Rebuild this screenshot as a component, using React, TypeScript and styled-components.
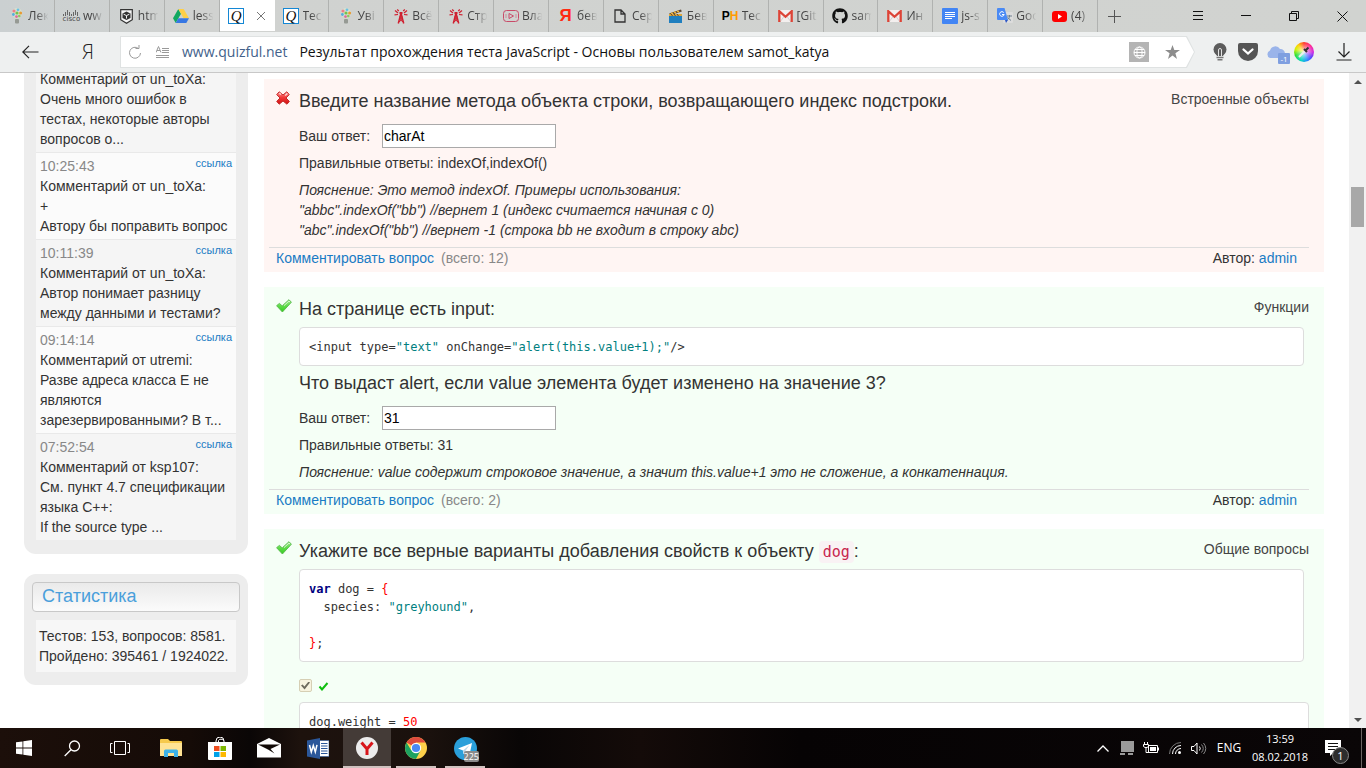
import React from "react";
import styled, { createGlobalStyle, css } from "styled-components";
import { FaGithub } from "react-icons/fa";

const GlobalStyle = createGlobalStyle`
  * { box-sizing: border-box; }
  html, body { margin: 0; height: 100%; overflow: hidden; }
  body {
    font-family: "Liberation Sans", Arial, sans-serif;
    font-size: 14px;
    line-height: 20px;
    color: #333;
    background: #fff;
  }
  button { border: 0; padding: 0; margin: 0; background: none; color: inherit; font: inherit; }
  svg { display: block; flex: none; }
`;

const uiFont = `"Open Sans", "Noto Sans", sans-serif`;

const Screen = styled.div`
  display: flex;
  flex-direction: column;
  height: 100vh;
`;

/* ---------- tab strip ---------- */

const TabBar = styled.header`
  display: flex;
  align-items: stretch;
  flex: none;
  height: 32px;
  background: linear-gradient(90deg, #cbd0d1 0, #d0d2d0 200px, #d1d3d0 100%);
  font-family: ${uiFont};
  font-size: 12px;
  color: #444;
`;

const Tabs = styled.nav`
  display: grid;
  grid-template-columns: repeat(20, minmax(0, 1fr));
  flex: 0 1 1098px;
  min-width: 0;
`;

const Tab = styled.button<{ $active?: boolean }>`
  display: flex;
  align-items: center;
  gap: 3px;
  min-width: 0;
  padding: 0 2px 0 8px;
  border-right: 1px solid #b0b2b0;
  ${(p) =>
    p.$active &&
    css`
      background: #fff;
      justify-content: space-between;
      padding-right: 8px;
      border-right-color: #fff;
      height: 31px;
    `}
`;

const TabIcon = styled.span`
  display: flex;
  align-items: center;
  justify-content: center;
  flex: none;
  width: 17px;
  height: 18px;
`;

const TabText = styled.span`
  flex: 1;
  min-width: 0;
  overflow: hidden;
  white-space: nowrap;
  text-align: left;
  mask-image: linear-gradient(90deg, #000 35%, transparent 85%);
`;

const NewTab = styled.button`
  display: flex;
  align-items: center;
  justify-content: center;
  width: 32px;
`;

const WindowButtons = styled.div`
  display: flex;
  margin-left: auto;
`;

const WindowButton = styled.button`
  display: flex;
  align-items: center;
  justify-content: center;
  width: 48px;
`;

const QuizMark = styled.span`
  display: flex;
  align-items: center;
  justify-content: center;
  width: 16px;
  height: 16px;
  border: 1px solid #1487d4;
  background: #fff;
  color: #111;
  font: italic 15px/14px "Liberation Serif", serif;
`;

const CiscoMark = styled.span`
  display: flex;
  flex-direction: column;
  align-items: center;
  font: 7px/7px "DejaVu Sans", sans-serif;
  color: #444;
`;

const PhMark = styled.span`
  font: bold 12px/16px "Liberation Sans", sans-serif;
  color: #000;
  b { color: #ff9a00; }
`;

const YaMark = styled.span`
  font: bold 17px/18px "Liberation Sans", sans-serif;
  color: #ff2a12;
`;

const CloseIcon = () => (
  <svg width="10" height="10" viewBox="0 0 10 10" stroke="#777" fill="none"><path d="M1 1l8 8M9 1L1 9" /></svg>
);

const BulbTab = () => (
  <svg width="12" height="16" viewBox="0 0 12 16">
    <circle cx="6" cy="5" r="5" fill="#d7e2cf" /><path d="M3 8h6l-1 3.500H4z" fill="#cfdcc6" />
    <circle cx="3" cy="3" r="1.600" fill="#ef7f86" /><circle cx="7" cy="1.800" r="1.400" fill="#6ac0e4" />
    <circle cx="9.600" cy="5" r="1.500" fill="#e79a35" /><circle cx="6" cy="5" r="1.600" fill="#76c24e" />
    <circle cx="2.400" cy="6.500" r="1.400" fill="#54aedb" /><circle cx="5.500" cy="8.600" r="1.400" fill="#df6c9d" /><circle cx="8.300" cy="8" r="1.300" fill="#8cc95f" />
    <rect x="4" y="11" width="4" height="4.500" rx="1" fill="#969a94" />
  </svg>
);

const ShieldTab = () => (
  <svg width="13" height="15" viewBox="0 0 13 15">
    <path d="M.7.7h11.600v10L6.500 14.300.7 10.700z" fill="#f4f4f4" stroke="#333" strokeWidth="1.200" />
    <path d="M6.500 2.500l4 2v4.500l-4 2-4-2V4.500z" fill="#333" />
    <path d="M3.600 5.200l2.900 1.400 2.900-1.400M6.500 6.600v3" stroke="#f4f4f4" fill="none" />
  </svg>
);

const DriveTab = () => (
  <svg width="16" height="14" viewBox="0 0 16 14">
    <path d="M5.300 0L0 9.300 2.700 14 8 4.700z" fill="#11a861" />
    <path d="M5.300 0h5.400L16 9.300h-5.400z" fill="#ffcf48" />
    <path d="M5.400 9.300H16L13.300 14H2.700z" fill="#3777e3" />
  </svg>
);

const AntennaTab = () => (
  <svg width="14" height="16" viewBox="0 0 14 16" fill="none" stroke="#cf2030">
    <path d="M7 5L4.300 15.500M7 5l2.700 10.500" strokeWidth="1.500" />
    <path d="M6 8h2M5.300 11h3.400M4.800 14L8.700 11M9.200 14L5.300 11M5.800 8.500l2.500 2.500M8.200 8.500L5.700 11" />
    <path d="M5.500 5h3" strokeWidth="2" />
    <path d="M4.800 3L3.200 1.500M9.200 3l1.600-1.500M4 5L1 2.500M10 5l3-2.500M4 6.500L.5 6.800M10 6.500l3.500.3" strokeWidth="1.200" />
  </svg>
);

const VideoTab = () => (
  <svg width="16" height="12" viewBox="0 0 16 12" fill="none" stroke="#c94a68">
    <rect x=".5" y=".5" width="15" height="11" rx="3" /><path d="M6 3.500v5L10.500 6z" /><path d="M3 4v4M13 4v4" opacity=".5" />
  </svg>
);

const FileTab = () => (
  <svg width="12" height="14" viewBox="0 0 12 14" fill="none" stroke="#333" strokeWidth="1.300">
    <path d="M1 1h6l4 4v8H1zM7 1v4h4" />
  </svg>
);

const ClapperTab = () => (
  <svg width="15" height="14" viewBox="0 0 15 14">
    <path d="M1 4.500L13 .5l.8 2L3 6z" fill="#5a4632" /><path d="M3 3.800l2 1.200M6 2.800l2 1.200M9 1.800l2 1.200" stroke="#f2b63c" strokeWidth="1.500" />
    <rect x="1" y="5" width="13" height="2.500" fill="#e0a63a" /><path d="M3 5l1.500 2M6 5l1.500 2M9 5l1.500 2" stroke="#5a4632" /><rect x="1" y="7" width="13" height="7" fill="#1f7fbf" />
  </svg>
);

const GmailTab = () => (
  <svg width="15" height="12" viewBox="0 0 15 12">
    <rect x=".5" width="14" height="12" rx="1" fill="#f3efee" />
    <path d="M2 12l4-5.500M13 12L9 6.500" stroke="#d5d0cf" />
    <path d="M1.300 12V1.200L7.500 6.800l6.200-5.600V12" fill="none" stroke="#dc4437" strokeWidth="2.300" />
  </svg>
);

const DocsTab = () => (
  <svg width="16" height="16" viewBox="0 0 16 16">
    <rect width="16" height="16" rx="1" fill="#4285f4" />
    <path d="M3 4.500h10M3 6.500h10M3 8.500h10M3 10.500h7" stroke="#fff" />
  </svg>
);

const TranslateTab = () => (
  <svg width="16" height="16" viewBox="0 0 16 16">
    <rect x="6" y="4" width="10" height="11" rx="1" fill="#dcdcdc" />
    <path d="M10 8h5M12.500 7v1c0 2-1 3-2.500 4M10.500 9.500l3.500 3" stroke="#6f8190" fill="none" />
    <path d="M1 0h6.500L11 12H1a1 1 0 0 1-1-1V1a1 1 0 0 1 1-1z" fill="#4a8af4" /><path d="M8 12h3l-2 3z" fill="#2a56c6" />
    <path d="M6.800 4.600A2.300 2.300 0 1 0 7.200 6.500H5" stroke="#fff" fill="none" />
  </svg>
);

const YoutubeTab = () => (
  <svg width="15" height="11" viewBox="0 0 15 11"><rect width="15" height="11" rx="3" fill="#f00" /><path d="M6 3v5l4-2.500z" fill="#fff" /></svg>
);

const Cisco = () => (
  <CiscoMark>
    <svg width="16" height="6" viewBox="0 0 16 6" stroke="#666">
      <path d="M.5 4v2M2.500 2v4M4.500 0v5M6.500 2v4M8.500 4v2M10.500 2v4M12.500 0v5M14.500 2v4" />
    </svg>
    cisco
  </CiscoMark>
);

const Quiz = () => <QuizMark>Q</QuizMark>;
const Ph = () => <PhMark>P<b>H</b></PhMark>;
const Ya = () => <YaMark>Я</YaMark>;
const Github = () => <FaGithub size={16} color="#111" />;

const tabs: { icon: React.FC; text: string; active?: boolean }[] = [
  { icon: BulbTab, text: "Лек" },
  { icon: Cisco, text: "ww" },
  { icon: ShieldTab, text: "htm" },
  { icon: DriveTab, text: "less" },
  { icon: Quiz, text: "", active: true },
  { icon: Quiz, text: "Тес" },
  { icon: BulbTab, text: "Уві" },
  { icon: AntennaTab, text: "Всё" },
  { icon: AntennaTab, text: "Стр" },
  { icon: VideoTab, text: "Вла" },
  { icon: Ya, text: "бев" },
  { icon: FileTab, text: "Сер" },
  { icon: ClapperTab, text: "Бев" },
  { icon: Ph, text: "Тес" },
  { icon: GmailTab, text: "[Git" },
  { icon: Github, text: "sam" },
  { icon: GmailTab, text: "Ин" },
  { icon: DocsTab, text: "js-s" },
  { icon: TranslateTab, text: "Goo" },
  { icon: YoutubeTab, text: "(4)" },
];

/* ---------- address bar ---------- */

const Toolbar = styled.div`
  display: flex;
  align-items: center;
  flex: none;
  height: 41px;
  padding-right: 14px;
  border-bottom: 1px solid #c8c8c8;
  background: #eef0f0;
  font-family: ${uiFont};
`;

const NavButton = styled.button`
  display: flex;
  align-items: center;
  justify-content: center;
  width: 56px;
  height: 32px;
  color: #222;
  font-size: 20px;
  font-weight: 300;

  &:first-child { width: 60px; }
`;

const AddressEdge = styled.div`
  display: flex;
  flex: 1;
  min-width: 0;
  margin-left: 4px;
  padding: 1px;
  background: #dfe2e2;
  clip-path: polygon(0 0, calc(100% - 8px) 0, 100% 50%, calc(100% - 8px) 100%, 0 100%);
`;

const Address = styled.div`
  display: flex;
  align-items: center;
  flex: 1;
  min-width: 0;
  height: 30px;
  padding: 0 14px 0 7px;
  background: #fff;
  color: #111;
  font-size: 14px;
  white-space: nowrap;
  clip-path: polygon(0 0, calc(100% - 8px) 0, 100% 50%, calc(100% - 8px) 100%, 0 100%);
`;

const SmallIcon = styled.button`
  display: flex;
  align-items: center;
  margin-right: 13px;
`;

const Host = styled.span`
  color: #42618a;
  margin-right: 12px;
`;

const PageTitle = styled.span`
  flex: 1;
  min-width: 0;
  overflow: hidden;
`;

const GlobeButton = styled.button`
  display: flex;
  align-items: center;
  justify-content: center;
  width: 20px;
  height: 20px;
  margin-right: 16px;
  background: #b4b4b4;
`;

const Extensions = styled.div`
  display: flex;
  align-items: center;
  gap: 8px;
  margin: 0 22px 0 15px;
`;

const ExtButton = styled.button`
  position: relative;
  display: flex;
  align-items: center;
  justify-content: center;
  width: 20px;
  height: 24px;
`;

const ExtBadge = styled.span`
  position: absolute;
  right: -4px;
  bottom: 0;
  width: 12px;
  height: 11px;
  border-radius: 1px;
  background: #7f9fe0;
  color: #fff;
  font-size: 8px;
  line-height: 11px;
`;

const ColorWheel = styled.span`
  display: flex;
  align-items: center;
  justify-content: center;
  width: 20px;
  height: 20px;
  border-radius: 50%;
  background: radial-gradient(circle, #fffc 0, transparent 65%),
    conic-gradient(#ff3c2a, #ff2a90, #d22ae0 90deg, #5a3cff, #1e8cff 160deg, #00d8c0 200deg, #2ee02e 250deg, #d8f000 290deg, #ffd000 320deg, #ff3c2a);
`;

/* ---------- page ---------- */

const Viewport = styled.div`
  display: flex;
  flex: 1;
  min-height: 0;
  overflow: hidden;
`;

const Page = styled.div`
  display: flex;
  align-items: flex-start;
  gap: 16px;
  flex: 1;
  min-width: 0;
  padding: 0 25px 0 24px;
`;

const Sidebar = styled.aside`
  display: flex;
  flex-direction: column;
  gap: 20px;
  flex: none;
  width: 224px;
`;

const Panel = styled.section<{ $first?: boolean }>`
  padding: ${(p) => (p.$first ? "0 12px 14px" : "8px 12px 13px")};
  border-radius: ${(p) => (p.$first ? "0 0 12px 12px" : "12px")};
  background: #ededed;
`;

const CommentList = styled.ul`
  margin: -4px 0 0;
  padding: 0;
  list-style: none;
`;

const Comment = styled.li`
  padding: 3px 4px;
  border-top: 1px solid #e9e9e9;
  background: #f5f5f5;

  &:first-child { border-top: 0; padding-top: 0; }
  &:nth-child(even) { background: #fbfbfb; }
`;

const CommentHead = styled.div`
  display: flex;
  justify-content: space-between;
  color: #888;
`;

const Link = styled.a`
  color: #1a7bc4;
  text-decoration: none;
`;

const SmallLink = styled(Link)`
  font-size: 11px;
  line-height: 14px;
`;

const CommentText = styled.p`
  margin: 0;
  white-space: pre-line;
`;

const PanelTitle = styled.h2`
  margin: 0 -4px 8px;
  padding: 0 9px;
  height: 30px;
  border: 1px solid #c8c8c8;
  border-radius: 4px;
  background: linear-gradient(#eaeaea, #fbfbfb);
  color: #4a9fdb;
  font-size: 18px;
  font-weight: normal;
  line-height: 26px;
`;

const PanelBody = styled.div`
  padding: 6px 3px;
  background: #f7f7f7;
  white-space: nowrap;
`;

const Main = styled.main`
  display: flex;
  flex-direction: column;
  gap: 15px;
  flex: 1;
  min-width: 0;
  padding-top: 6px;
`;

const Card = styled.article<{ $wrong?: boolean }>`
  background: ${(p) => (p.$wrong ? "#fff5f3" : "#f5fff6")};
`;

const CardBody = styled.div`
  display: grid;
  grid-template-columns: 16px minmax(0, 1fr);
  column-gap: 7px;
  padding: 10px 15px 7px 12px;
`;

const Mark = styled.span`
  padding-top: 2px;
`;

const Head = styled.div`
  display: flex;
  justify-content: space-between;
  gap: 20px;
`;

const Title = styled.h3`
  margin: 0;
  font-size: 18px;
  font-weight: normal;
  line-height: 24px;
`;

const FollowUp = styled(Title)`
  padding-top: 5px;
`;

const Category = styled.span`
  color: #444;
  white-space: nowrap;
`;

const InlineCode = styled.code`
  padding: 2px 4px;
  border-radius: 4px;
  background: #f9f2f4;
  color: #c7254e;
  font-family: "DejaVu Sans Mono", monospace;
  font-size: 15px;
  line-height: 16px;
`;

const Code = styled.pre<{ $wide?: boolean }>`
  margin: ${(p) => (p.$wide ? "0" : "6px 5px 0 0")};
  padding: 10px 9px 9px;
  border: 1px solid #ddd;
  border-radius: 4px;
  background: #fff;
  font: 12px/18px "DejaVu Sans Mono", monospace;
`;

const Str = styled.span`
  color: #008080;
`;

const Red = styled.span`
  color: #f00;
`;

const Keyword = styled.b`
  color: #000080;
`;

const AnswerRow = styled.div`
  display: flex;
  align-items: center;
  gap: 12px;
  margin-top: 11px;
`;

const AnswerInput = styled.input`
  width: 174px;
  height: 24px;
  padding: 1px;
  border: 1px solid #a9a9a9;
  border-radius: 0;
  background: #fff;
  color: #000;
  font: 14px/20px "Liberation Sans", Arial, sans-serif;
`;

const Correct = styled.p`
  margin: 5px 0 7px;
`;

const Explanation = styled.p`
  margin: 0;
  font-style: italic;
`;

const CardFooter = styled.footer`
  display: flex;
  gap: 7px;
  margin: 0 15px 0 5px;
  padding: 0 12px 4px 7px;
  border-top: 1px solid #ddd;
`;

const Count = styled.span`
  color: #888;
`;

const Author = styled.span`
  margin-left: auto;
`;

const Option = styled.div`
  display: flex;
  align-items: center;
  gap: 6px;
  height: 13px;
  margin: 17px 0 10px;
`;

const OptionBox = styled.input`
  appearance: none;
  display: grid;
  place-items: center;
  width: 13px;
  height: 13px;
  margin: 0;
  border: 1px solid #d6cfb4;
  border-radius: 2px;
  background: #f7f3df;

  &:checked::before {
    content: "";
    width: 9px;
    height: 8px;
    background: #6e6b5e;
    clip-path: polygon(0 50%, 18% 38%, 38% 62%, 84% 0, 100% 12%, 40% 100%);
  }
`;

const WrongIcon = () => (
  <svg width="14" height="14" viewBox="0 0 14 14">
    <defs>
      <linearGradient id="wrong" x1="0" y1="0" x2="0" y2="1"><stop stopColor="#ff9a9a" /><stop offset=".45" stopColor="#f23a3a" /><stop offset="1" stopColor="#d00f0f" /></linearGradient>
    </defs>
    <path d="M3.200.8L7 4 10.800.8l2.400 2.800L10 7l3.400 3.400-2.400 2.800L7 10l-3.800 3.200L.7 10.400 4 7 .7 3.600z" fill="url(#wrong)" stroke="#c32a2a" strokeLinejoin="round" />
    <path d="M3.300 2.200L5 3.600M11.400 2.600L9.200 4.600" stroke="#ffdada" strokeWidth="1.300" />
  </svg>
);

const RightIcon = () => (
  <svg width="16" height="14" viewBox="0 0 16 14">
    <defs>
      <linearGradient id="right" x1="0" y1="0" x2="0" y2="1"><stop stopColor="#a4ec94" /><stop offset=".5" stopColor="#5fdc4a" /><stop offset="1" stopColor="#35cc20" /></linearGradient>
    </defs>
    <path d="M.6 6.700l2.800-2.300 2.800 2.500L13 .7l2.400 2.500L6.400 13z" fill="url(#right)" stroke="#58b84c" strokeWidth=".9" strokeLinejoin="round" />
    <path d="M8 6.600L13 2l1 1" stroke="#d5f8cc" fill="none" />
  </svg>
);

const SmallCheck = () => (
  <svg width="11" height="10" viewBox="0 0 11 10"><path d="M1.500 5.500l2.500 3L9.500 2" fill="none" stroke="#0fbf0f" strokeWidth="2" /></svg>
);

/* ---------- scroll bar ---------- */

const ScrollBar = styled.div`
  display: flex;
  flex-direction: column;
  align-items: center;
  flex: none;
  width: 17px;
  background: #f1f1f1;
`;

const ScrollArrow = styled.button`
  display: flex;
  align-items: center;
  justify-content: center;
  width: 17px;
  height: 17px;
`;

const ScrollTrack = styled.div`
  flex: 1;
  padding-top: 97px;
`;

const ScrollThumb = styled.div`
  width: 13px;
  height: 40px;
  background: #a8a8a8;
`;

/* ---------- task bar ---------- */

const Taskbar = styled.footer`
  display: flex;
  align-items: stretch;
  flex: none;
  height: 40px;
  padding-right: 4px;
  background: linear-gradient(90deg, #1c0f0a 0, #150b07 190px, #0a0606 250px, #1d120d 300px, #1a110d 430px, #090606 520px, #140b09 640px, #060304 800px, #0a0607 100%);
  color: #fff;
  font-family: ${uiFont};
  font-size: 12px;
`;

const TaskGroup = styled.div<{ $apps?: boolean }>`
  display: flex;
  gap: ${(p) => (p.$apps ? "1px" : "0")};
  margin-left: ${(p) => (p.$apps ? "3px" : "0")};
`;

const TaskButton = styled.button<{ $open?: boolean; $active?: boolean }>`
  position: relative;
  display: flex;
  align-items: center;
  justify-content: center;
  width: 48px;
  background: ${(p) => (p.$active ? "#443b37" : "transparent")};

  &::after {
    content: "";
    display: ${(p) => (p.$open || p.$active ? "block" : "none")};
    position: absolute;
    bottom: 0;
    left: ${(p) => (p.$active ? "0" : "4px")};
    right: ${(p) => (p.$active ? "0" : "4px")};
    height: 2px;
    background: #cfc2bf;
  }
`;

const TaskBadge = styled.span`
  position: absolute;
  right: 10px;
  bottom: 6px;
  border-radius: 2px;
  background: #8a8a8a;
  font-size: 9px;
  line-height: 11px;
`;

const Tray = styled.div`
  display: flex;
  align-items: center;
  margin-left: auto;
`;

const TrayButton = styled.button`
  display: flex;
  align-items: center;
  justify-content: center;
  width: 24px;
  height: 40px;
`;

const Language = styled.button`
  width: 36px;
`;

const Clock = styled.time`
  width: 66px;
  text-align: center;
  font-size: 11px;
  line-height: 18px;
`;

const Notifications = styled.button`
  position: relative;
  display: flex;
  align-items: center;
  justify-content: center;
  width: 40px;
  height: 40px;
  margin-right: 8px;
`;

const NoticeCount = styled.span`
  position: absolute;
  right: 4px;
  bottom: 4px;
  width: 17px;
  height: 17px;
  border: 1px solid #888;
  border-radius: 50%;
  background: #2d2d2d;
  font-size: 11px;
  line-height: 15px;
`;

const ShowDesktop = styled.div`
  align-self: stretch;
  width: 1px;
  background: #6b6462;
`;

const comments = [
  { time: "", text: "Комментарий от un_toXa:\nОчень много ошибок в тестах, некоторые авторы вопросов о..." },
  { time: "10:25:43", text: "Комментарий от un_toXa:\n+\nАвтору бы поправить вопрос" },
  { time: "10:11:39", text: "Комментарий от un_toXa:\nАвтор понимает разницу между данными и тестами?" },
  { time: "09:14:14", text: "Комментарий от utremi:\nРазве адреса класса E не являются зарезервированными? В т..." },
  { time: "07:52:54", text: "Комментарий от ksp107:\nСм. пункт 4.7 спецификации языка C++:\nIf the source type ..." },
];

const Answer = ({ id, value }: { id: string; value: string }) => (
  <AnswerRow>
    <label htmlFor={id}>Ваш ответ:</label>
    <AnswerInput id={id} type="text" defaultValue={value} />
  </AnswerRow>
);

const QuestionFooter = ({ count }: { count: number }) => (
  <CardFooter>
    <Link href="#comments">Комментировать вопрос</Link>
    <Count>(всего: {count})</Count>
    <Author>Автор: <Link href="#admin">admin</Link></Author>
  </CardFooter>
);

const BrowserTabs = () => (
  <TabBar>
    <Tabs>
      {tabs.map(({ icon: Icon, text, active }, i) => (
        <Tab key={i} $active={active}>
          <TabIcon><Icon /></TabIcon>
          {active ? <CloseIcon /> : <TabText>{text}</TabText>}
        </Tab>
      ))}
    </Tabs>
    <NewTab aria-label="Новая вкладка">
      <svg width="13" height="13" viewBox="0 0 13 13" stroke="#555"><path d="M6.500 0v13M0 6.500h13" /></svg>
    </NewTab>
    <WindowButtons>
      <WindowButton aria-label="Меню">
        <svg width="10" height="10" viewBox="0 0 10 10" stroke="#111"><path d="M0 .5h10M0 4.500h10M0 8.500h10" /></svg>
      </WindowButton>
      <WindowButton aria-label="Свернуть">
        <svg width="10" height="10" viewBox="0 0 10 10" stroke="#111"><path d="M0 4.500h10" /></svg>
      </WindowButton>
      <WindowButton aria-label="Развернуть">
        <svg width="10" height="10" viewBox="0 0 10 10" stroke="#111" fill="none"><path d="M.5 2.500h7v7h-7zM2.500 2.500v-2h7v7h-2" /></svg>
      </WindowButton>
      <WindowButton aria-label="Закрыть">
        <svg width="11" height="11" viewBox="0 0 11 11" stroke="#111"><path d="M.5.5l10 10M10.500.5l-10 10" /></svg>
      </WindowButton>
    </WindowButtons>
  </TabBar>
);

const AddressBar = () => (
  <Toolbar>
    <NavButton aria-label="Назад">
      <svg width="17" height="14" viewBox="0 0 17 14" fill="none" stroke="#222" strokeWidth="1.200"><path d="M16.500 7H1M7 .8L.8 7 7 13.200" /></svg>
    </NavButton>
    <NavButton>Я</NavButton>
    <AddressEdge>
      <Address>
        <SmallIcon aria-label="Обновить">
          <svg width="15" height="15" viewBox="0 0 15 15" fill="none" stroke="#999"><path d="M12.500 8A5.500 5.500 0 1 1 10.500 3.500M7.500 3.500h3.500V0" /></svg>
        </SmallIcon>
        <SmallIcon aria-label="Режим чтения">
          <svg width="13" height="13" viewBox="0 0 13 13" fill="none" stroke="#999"><path d="M0 6.500L2.500.5 5 6.500M1 4.500h3M6 2.500h7M6 4.500h7M6 6.500h7M0 9.500h13M0 11.500h13" /></svg>
        </SmallIcon>
        <Host>www.quizful.net</Host>
        <PageTitle>Результат прохождения теста JavaScript - Основы пользователем samot_katya</PageTitle>
        <GlobeButton aria-label="Перевести">
          <svg width="13" height="13" viewBox="0 0 13 13" fill="none" stroke="#fff"><circle cx="6.500" cy="6.500" r="5.500" /><ellipse cx="6.500" cy="6.500" rx="2.600" ry="5.500" /><path d="M1 6.500h11M2 3.500h9M2 9.500h9" /></svg>
        </GlobeButton>
        <button aria-label="В избранное">
          <svg width="15" height="14" viewBox="0 0 15 14" fill="#8d8d8d"><path d="M7.500 0l1.800 5H15l-4.600 3.200L12 14l-4.500-3.500L3 14l1.600-5.800L0 5h5.700z" /></svg>
        </button>
      </Address>
    </AddressEdge>
    <Extensions>
      <ExtButton aria-label="Лампа">
        <svg width="14" height="18" viewBox="0 0 14 18">
          <circle cx="7" cy="6.500" r="6.500" fill="#5c5c5c" /><path d="M2.500 10h9L10 13H4z" fill="#5c5c5c" />
          <path d="M5.500 13V7a1.500 1.500 0 0 1 3 0v6" fill="none" stroke="#e4e4e4" /><path d="M3.500 14.500h7M4.500 16.800h5" stroke="#777" strokeWidth="1.500" />
        </svg>
      </ExtButton>
      <ExtButton aria-label="Pocket">
        <svg width="20" height="18" viewBox="0 0 20 18">
          <path d="M2 0h16a2 2 0 0 1 2 2v6a10 10 0 0 1-20 0V2a2 2 0 0 1 2-2z" fill="#555" /><path d="M5.500 6.500L10 10.500l4.500-4" fill="none" stroke="#fff" strokeWidth="2.300" strokeLinecap="round" />
        </svg>
      </ExtButton>
      <ExtButton aria-label="Облако">
        <svg width="20" height="14" viewBox="0 0 20 14"><path d="M4 13a4 4 0 0 1 0-7.500A5.500 5.500 0 0 1 14 4a4.500 4.500 0 0 1 5 4.500V13z" fill="#9ab4ea" /></svg>
        <ExtBadge>-1</ExtBadge>
      </ExtButton>
      <ExtButton aria-label="Пипетка">
        <ColorWheel>
          <svg width="12" height="12" viewBox="0 0 12 12"><path d="M1 11l6-6" stroke="#eee" strokeWidth="2" /><path d="M6 3l3 3M8 4l2.500-2.500" stroke="#333" strokeWidth="2" /></svg>
        </ColorWheel>
      </ExtButton>
    </Extensions>
    <button aria-label="Загрузки">
      <svg width="16" height="18" viewBox="0 0 16 18" fill="none" stroke="#222" strokeWidth="1.200"><path d="M8 0v13.500M2.500 8.500L8 14l5.500-5.500M.5 17h15" /></svg>
    </button>
  </Toolbar>
);

const SystemTaskbar = () => (
  <Taskbar>
    <TaskGroup>
      <TaskButton aria-label="Пуск">
        <svg width="16" height="16" viewBox="0 0 16 16" fill="#fff"><path d="M0 2.300L6.500 1.400v6.200H0zM7.300 1.300L16 0v7.600H7.300zM0 8.400h6.500v6.200L0 13.700zM7.300 8.400H16V16l-8.700-1.300z" /></svg>
      </TaskButton>
      <TaskButton aria-label="Поиск">
        <svg width="17" height="17" viewBox="0 0 17 17" fill="none" stroke="#fff" strokeWidth="1.300"><circle cx="10.500" cy="6" r="5" /><path d="M7 9.700L.7 16" /></svg>
      </TaskButton>
      <TaskButton aria-label="Представление задач">
        <svg width="20" height="14" viewBox="0 0 20 14" fill="none" stroke="#fff"><path d="M4.500.5h11v13h-11zM2.500 2.500h-2v9h2M17.500 2.500h2v9h-2" /></svg>
      </TaskButton>
    </TaskGroup>
    <TaskGroup $apps>
      <TaskButton aria-label="Проводник">
        <svg width="22" height="18" viewBox="0 0 22 18"><path d="M0 1a1 1 0 0 1 1-1h7l2 2h11a1 1 0 0 1 1 1v14H0z" fill="#f6c94c" /><path d="M0 4h22v13H0z" fill="#ffe394" /><path d="M4 18v-6a1.500 1.500 0 0 1 1.500-1.500h11A1.500 1.500 0 0 1 18 12v6h-4v-4H8v4z" fill="#3eb2e8" /></svg>
      </TaskButton>
      <TaskButton aria-label="Магазин">
        <svg width="24" height="23" viewBox="0 0 24 23"><path d="M8 6V4a4 4 0 0 1 8 0v2M10.500 6V3.500a3 3 0 0 1 5 0" fill="none" stroke="#fff" /><path d="M0 5h24v17a1 1 0 0 1-1 1H1a1 1 0 0 1-1-1z" fill="#fff" /><path d="M6 9h5.500v5H6z" fill="#f04e1f" /><path d="M12.500 9H18v5h-5.500z" fill="#7db700" /><path d="M6 15h5.500v5H6z" fill="#00a1e8" /><path d="M12.500 15H18v5h-5.500z" fill="#fdb800" /></svg>
      </TaskButton>
      <TaskButton aria-label="Почта">
        <svg width="24" height="20" viewBox="0 0 24 20" fill="#fff"><path d="M0 6L12 0l12 6v13.500H0z" /><path d="M1 6.500h22l-9.500 4.500 4 4.500-6.500-4z" fill="#120a07" /></svg>
      </TaskButton>
      <TaskButton aria-label="Word">
        <svg width="22" height="21" viewBox="0 0 22 21"><path d="M11 2.500h11v16H11z" fill="#fff" stroke="#2b579a" strokeWidth=".6" /><path d="M14 5.500h6.500M14 8h6.500M14 10.500h6.500M14 13h6.500M14 15.500h6.500" stroke="#2b579a" strokeWidth="1.200" /><path d="M0 2.500L13 0v21L0 18.500z" fill="#2b579a" /><path d="M2.500 7l1.800 7 2-6.500 2 6.500L10 6.800" fill="none" stroke="#fff" strokeWidth="1.500" /></svg>
      </TaskButton>
      <TaskButton $active aria-label="Яндекс.Браузер">
        <svg width="22" height="22" viewBox="0 0 22 22"><circle cx="11" cy="11" r="11" fill="#ececec" /><path d="M5.500 5.500L11 12l5.500-6.500M11 11.500V18" fill="none" stroke="#d8151b" strokeWidth="3" /></svg>
      </TaskButton>
      <TaskButton $open aria-label="Chrome">
        <svg width="22" height="22" viewBox="0 0 22 22"><circle cx="11" cy="11" r="11" fill="#fdd04a" /><path d="M11 11L1.500 5.500A11 11 0 0 1 20.500 5.500H11z" fill="#dd4b3e" /><path d="M1.500 5.500A11 11 0 0 0 11 22l4.500-8.500L6 13z" fill="#1da261" /><circle cx="11" cy="11" r="5.200" fill="#fff" /><circle cx="11" cy="11" r="4.100" fill="#4a8af5" /></svg>
      </TaskButton>
      <TaskButton $open aria-label="Telegram">
        <svg width="23" height="23" viewBox="0 0 23 23"><circle cx="11.500" cy="11.500" r="11.500" fill="#2a9fda" /><path d="M4 11.500L18 6l-2.500 12-4-3-2 2-.5-3.500z" fill="#fff" /><path d="M9 13.500l6.500-5.500-4.500 6.500-1.500 2.500z" fill="#b9d7ea" /></svg>
        <TaskBadge>225</TaskBadge>
      </TaskButton>
    </TaskGroup>
    <Tray>
      <TrayButton aria-label="Скрытые значки">
        <svg width="12" height="7" viewBox="0 0 12 7" fill="none" stroke="#fff" strokeWidth="1.300"><path d="M.5 6.500L6 1l5.500 5.500" /></svg>
      </TrayButton>
      <TrayButton aria-label="Устройство">
        <svg width="14" height="14" viewBox="0 0 14 14" fill="#9a9a9a"><path d="M1 0h13v11H1zM0 12h5v2H0zM8 12h5v2H8z" /></svg>
      </TrayButton>
      <TrayButton aria-label="Батарея">
        <svg width="16" height="12" viewBox="0 0 16 12" fill="none" stroke="#fff"><path d="M5.500 3.500h9v7h-9zM15.500 5.500v3M1.500 0v2M4.500 0v2M.5 2.500h5v2l-1.500 1h-2L.5 4.500zM3 5.500v5h3" /><path d="M7 5h6v4H7z" fill="#fff" stroke="none" /></svg>
      </TrayButton>
      <TrayButton aria-label="Сеть">
        <svg width="12" height="12" viewBox="0 0 12 12" fill="none" stroke="#fff"><path d="M.5 12A11.500 11.500 0 0 1 12 .5" stroke="#777" /><path d="M3.500 12A8.500 8.500 0 0 1 12 3.500M6.500 12A5.500 5.500 0 0 1 12 6.500" /><circle cx="10.500" cy="10.500" r="1.500" fill="#fff" stroke="none" /></svg>
      </TrayButton>
      <TrayButton aria-label="Громкость">
        <svg width="16" height="13" viewBox="0 0 16 13" fill="none" stroke="#fff"><path d="M.5 4.500h2.500l3-3.500v11l-3-3.500H.5zM8.500 4.500q1.500 2 0 4" /><path d="M10.500 2.500q3.500 4 0 8M12.500 1q4.500 5.500 0 11" stroke="#888" /></svg>
      </TrayButton>
      <Language>ENG</Language>
      <Clock>13:59<br />08.02.2018</Clock>
      <Notifications aria-label="Уведомления">
        <svg width="16" height="16" viewBox="0 0 16 16"><path d="M0 0h16v13H8l-3 3v-3H0z" fill="#fff" /><path d="M3 3.500h10M3 6.500h10M3 9.500h7" stroke="#111" /></svg>
        <NoticeCount>1</NoticeCount>
      </Notifications>
      <ShowDesktop />
    </Tray>
  </Taskbar>
);

export default function App() {
  return (
    <Screen>
      <GlobalStyle />
      <BrowserTabs />
      <AddressBar />
      <Viewport>
        <Page>
          <Sidebar>
            <Panel $first>
              <CommentList>
                {comments.map((c, i) => (
                  <Comment key={i}>
                    {c.time && (
                      <CommentHead>
                        <span>{c.time}</span>
                        <SmallLink href="#comment">ссылка</SmallLink>
                      </CommentHead>
                    )}
                    <CommentText>{c.text}</CommentText>
                  </Comment>
                ))}
              </CommentList>
            </Panel>
            <Panel>
              <PanelTitle>Статистика</PanelTitle>
              <PanelBody>
                Тестов: 153, вопросов: 8581.<br />
                Пройдено: 395461 / 1924022.
              </PanelBody>
            </Panel>
          </Sidebar>
          <Main>
            <Card $wrong>
              <CardBody>
                <Mark><WrongIcon /></Mark>
                <div>
                  <Head>
                    <Title>Введите название метода объекта строки, возвращающего индекс подстроки.</Title>
                    <Category>Встроенные объекты</Category>
                  </Head>
                  <Answer id="answer-1" value="charAt" />
                  <Correct>Правильные ответы: indexOf,indexOf()</Correct>
                  <Explanation>
                    Пояснение: Это метод indexOf. Примеры использования:<br />
                    "abbc".indexOf("bb") //вернет 1 (индекс считается начиная с 0)<br />
                    "abc".indexOf("bb") //вернет -1 (строка bb не входит в строку abc)
                  </Explanation>
                </div>
              </CardBody>
              <QuestionFooter count={12} />
            </Card>
            <Card>
              <CardBody>
                <Mark><RightIcon /></Mark>
                <div>
                  <Head>
                    <Title>На странице есть input:</Title>
                    <Category>Функции</Category>
                  </Head>
                  <Code>
                    {"<input type="}<Str>"text"</Str>{" onChange="}<Str>"alert(this.value+1);"</Str>{"/>"}
                  </Code>
                  <FollowUp>Что выдаст alert, если value элемента будет изменено на значение 3?</FollowUp>
                  <Answer id="answer-2" value="31" />
                  <Correct>Правильные ответы: 31</Correct>
                  <Explanation>
                    Пояснение: value содержит строковое значение, а значит this.value+1 это не сложение, а конкатеннация.
                  </Explanation>
                </div>
              </CardBody>
              <QuestionFooter count={2} />
            </Card>
            <Card>
              <CardBody>
                <Mark><RightIcon /></Mark>
                <div>
                  <Head>
                    <Title>Укажите все верные варианты добавления свойств к объекту <InlineCode>dog</InlineCode>:</Title>
                    <Category>Общие вопросы</Category>
                  </Head>
                  <Code>
                    <Keyword>var</Keyword>{" dog = "}<Red>{"{"}</Red>{"\n  species: "}<Str>"greyhound"</Str>{",\n\n"}<Red>{"}"}</Red>;
                  </Code>
                  <Option>
                    <OptionBox type="checkbox" defaultChecked aria-labelledby="option-1" />
                    <SmallCheck />
                  </Option>
                  <Code $wide id="option-1">{"dog.weight = "}<Red>50</Red></Code>
                </div>
              </CardBody>
            </Card>
          </Main>
        </Page>
        <ScrollBar>
          <ScrollArrow aria-label="Вверх">
            <svg width="8" height="4" viewBox="0 0 8 4" fill="#505050"><path d="M0 4l4-4 4 4z" /></svg>
          </ScrollArrow>
          <ScrollTrack><ScrollThumb /></ScrollTrack>
          <ScrollArrow aria-label="Вниз">
            <svg width="8" height="4" viewBox="0 0 8 4" fill="#505050"><path d="M0 0h8L4 4z" /></svg>
          </ScrollArrow>
        </ScrollBar>
      </Viewport>
      <SystemTaskbar />
    </Screen>
  );
}
